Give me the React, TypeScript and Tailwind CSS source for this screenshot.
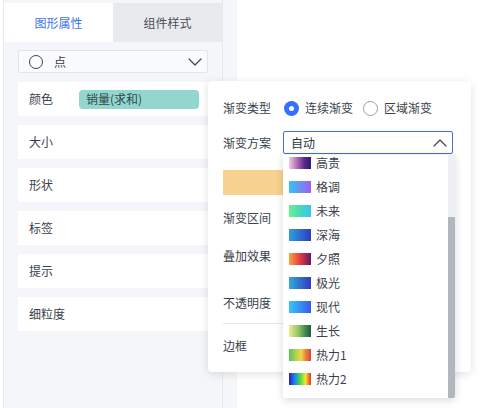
import { ChevronDown, ChevronUp } from 'lucide-react';

const rows = ['大小', '形状', '标签', '提示', '细粒度'];

const schemes = [
  { name: '高贵', bg: 'linear-gradient(90deg,#f2cde0,#b46fb8 35%,#5a2a8a 70%,#2a1c6e)' },
  { name: '格调', bg: 'linear-gradient(90deg,#36c3f7,#6f8cf3 55%,#a35ceb)' },
  { name: '未来', bg: 'linear-gradient(90deg,#6cf08a,#46d6c4 55%,#3ec2f0)' },
  { name: '深海', bg: 'linear-gradient(90deg,#2fa0d8,#2e6ed0 50%,#2d3cbf)' },
  { name: '夕照', bg: 'linear-gradient(90deg,#f8a63a,#e33a48 50%,#5c1a5c)' },
  { name: '极光', bg: 'linear-gradient(90deg,#35a8d9,#3270cc 50%,#3338c0)' },
  { name: '现代', bg: 'linear-gradient(90deg,#38c6f6,#3892f2 50%,#3658ef)' },
  { name: '生长', bg: 'linear-gradient(90deg,#eeee90,#8fc066 45%,#3c8a50 75%,#1f5a40)' },
  { name: '热力1', bg: 'linear-gradient(90deg,#5cc25a,#b8d452 35%,#f2d64a 55%,#e88840 75%,#d9443a)' },
  { name: '热力2', bg: 'linear-gradient(90deg,#2a1ac8,#1e7ef0 25%,#46d84a 50%,#f2e632 75%,#e8301e)' },
];

function Radio({ checked }: { checked: boolean }) {
  return checked ? (
    <span className="flex h-[15px] w-[15px] shrink-0 items-center justify-center rounded-full bg-[#3370ff]">
      <span className="h-[5px] w-[5px] rounded-full bg-white" />
    </span>
  ) : (
    <span className="block h-[15px] w-[15px] shrink-0 rounded-full border border-[#9aa0aa] bg-white" />
  );
}

export default function App() {
  return (
    <div className="relative flex h-[408px] w-[483px] overflow-hidden bg-white font-['Noto_Sans_CJK_SC','Noto_Sans',sans-serif] text-xs text-[#3a3f4b]">
      <div className="w-[3px]" />
      {/* left panel */}
      <div className="flex w-[220px] flex-col border-x border-[#e6e8ed] bg-[#f5f6f9] pt-[3px]">
        <div className="grid h-[39px] grid-cols-2">
          <div className="flex items-center justify-center bg-white text-[#3b74e6]">图形属性</div>
          <div className="flex items-center justify-center bg-[#e9eaee] text-[#4a4f5a]">组件样式</div>
        </div>
        <div className="flex flex-col pl-[14px] pr-[14px]">
          <div className="mt-[8px] flex h-[23px] items-center rounded-[2px] border border-[#e2e4e9] bg-[#fafbfc] pl-[10px]">
            <span className="h-[14px] w-[14px] rounded-full border-[1.5px] border-[#3f4450]" />
            <span className="ml-[11px] flex-1">点</span>
            <ChevronDown size={24} strokeWidth={1.2} className="text-[#3f4450]" />
          </div>
          <div className="mt-[9px] flex flex-col gap-[9px]">
            <div className="flex h-[34px] items-center bg-white pl-[11px]">
              <span className="w-[50px]">颜色</span>
              <span className="flex h-[19px] w-[120px] items-center rounded-[4px] bg-[#93d6cd] pl-[7px] text-[#2f4a47]">
                销量(求和)
              </span>
            </div>
            {rows.map((r) => (
              <div key={r} className="flex h-[34px] items-center bg-white pl-[11px]">
                {r}
              </div>
            ))}
          </div>
        </div>
      </div>
      <div className="w-[14px] bg-[#f6f7f9]" />
      <div className="flex-1" />

      {/* gradient popover */}
      <div className="absolute left-[208px] top-[81px] w-[263px] rounded-[4px] bg-white pb-[16px] pl-[15px] pr-[18px] pt-[17px] shadow-[0_2px_10px_rgba(0,0,0,0.12)]">
        <div className="flex h-[20px] items-center">
          <span className="w-[61px]">渐变类型</span>
          <Radio checked />
          <span className="ml-[6px]">连续渐变</span>
          <span className="ml-[10px] flex">
            <Radio checked={false} />
          </span>
          <span className="ml-[6px]">区域渐变</span>
        </div>
        <div className="mt-[13px] flex h-[23px] items-center">
          <span className="w-[60px]">渐变方案</span>
          <div className="relative flex-1">
            <div className="flex h-[23px] items-center rounded-[2px] border border-[#3d6fd6] pl-[7px]">
              <span className="flex-1 text-[#2f3440]">自动</span>
              <ChevronUp size={24} strokeWidth={1.2} className="text-[#3f4450]" />
            </div>
            <div className="absolute left-0 top-[24px] z-10 flex h-[243px] w-[172px] overflow-hidden rounded-b-[2px] bg-white shadow-[0_2px_8px_rgba(0,0,0,0.15)]">
              <div className="flex-1 overflow-hidden">
                <div className="-mt-[4px] flex flex-col">
                  {schemes.map((s) => (
                    <div key={s.name} className="flex h-[24px] items-center pl-[6px]">
                      <span className="h-[12px] w-[22px]" style={{ background: s.bg }} />
                      <span className="ml-[5px] text-[#3a3f4b]">{s.name}</span>
                    </div>
                  ))}
                </div>
              </div>
              <div className="flex w-[7px] flex-col bg-[#eef0f3]">
                <div className="h-[62px]" />
                <div className="flex-1 bg-[#b2b6be]" />
              </div>
            </div>
          </div>
        </div>
        <div className="mt-[16px] h-[25px] bg-[#f8d290]" />
        <div className="mt-[13px] flex h-[20px] items-center">渐变区间</div>
        <div className="mt-[18px] flex h-[20px] items-center">叠加效果</div>
        <div className="mt-[27px] flex h-[20px] items-center">不透明度</div>
        <div className="mt-[10px] h-px bg-[#e4e6eb]" />
        <div className="mt-[12px] flex h-[20px] items-center">边框</div>
      </div>
    </div>
  );
}
